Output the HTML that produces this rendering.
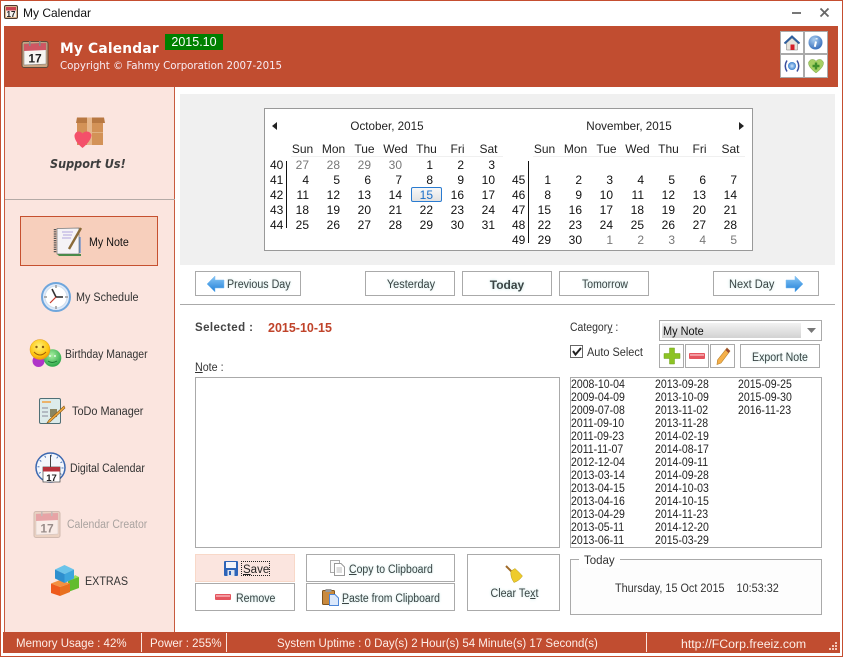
<!DOCTYPE html>
<html><head><meta charset="utf-8"><title>My Calendar</title>
<style>
html,body{margin:0;padding:0;background:#fff}
#w{position:relative;width:843px;height:657px;overflow:hidden;background:#fff;font-family:"Liberation Sans",sans-serif;font-size:12px;color:#222}
.a{position:absolute}
.t{position:absolute;white-space:nowrap;line-height:14px;transform:scaleX(var(--s,1));transform-origin:0 50%}
.c{text-align:center;transform-origin:50% 50%}
.b{position:absolute;box-sizing:border-box;border:1px solid #aaa;background:#fff}
.g{color:#3a4444;text-shadow:0 0 3px #bfe3e0;font-size:11.5px}
.s{color:#333;font-size:11.5px}
.st{color:#fdeee8;font-size:11.5px}
.r{position:absolute;display:flex;height:15px;line-height:15px;color:#111}
.r span{display:block;width:31px;text-align:right;flex:none}
.r i{font-style:normal;color:#777}
.h span{text-align:center;color:#222}
.d{font-size:11.5px;color:#222;line-height:13px;position:absolute;top:379px;transform:scaleX(.915);transform-origin:0 50%}
svg{position:absolute;overflow:visible}
</style></head><body><div id="w">
<!-- window frame -->
<div class="a" style="left:0;top:0;width:843px;height:1px;background:#c54e30"></div>
<div class="a" style="left:0;top:0;width:1px;height:657px;background:#c54e30"></div>
<div class="a" style="left:842px;top:0;width:1px;height:657px;background:#c54e30"></div>
<div class="a" style="left:0;top:656px;width:843px;height:1px;background:#c54e30"></div>

<!-- title bar -->
<svg style="left:4px;top:5px" width="14" height="14" viewBox="0 0 14 14"><rect x=".5" y=".5" width="13" height="13" rx="1.5" fill="#d9b48c" stroke="#4a3a30"/><rect x="2" y="2" width="10" height="10" fill="#f6f3ee"/><rect x="2" y="2" width="10" height="3.500" fill="#c8434f"/><text x="7" y="12" font-size="8" font-weight="bold" text-anchor="middle" font-family="Liberation Sans" fill="#222">17</text></svg>
<div class="t" style="left:23px;top:6px;color:#111">My Calendar</div>
<div class="a" style="left:792px;top:12px;width:9px;height:2px;background:#777"></div>
<svg style="left:820px;top:8px" width="9" height="9" viewBox="0 0 9 9"><path d="M0.500 0.500L8.500 8.500M8.500 0.500L0.500 8.500" stroke="#666" stroke-width="1.800"/></svg>

<!-- header -->
<div class="a" style="left:4px;top:26px;width:834px;height:61px;background:#c14d30"></div>
<svg style="left:21px;top:40px" width="28" height="28" viewBox="0 0 28 28">
<rect x="1" y="1.500" width="26" height="26" rx="2" fill="#c9a684" stroke="#5d4a3c"/>
<path d="M3 4L25 3V24L3 25Z" fill="#f7f5f2" stroke="#777" stroke-width=".5"/>
<path d="M3 4L25 3V10L3 11Z" fill="#cf5663"/>
<rect x="8" y="1" width="1.600" height="5" fill="#888"/><rect x="18" y="1" width="1.600" height="5" fill="#888"/>
<text x="14" y="22.500" font-size="12" font-weight="bold" text-anchor="middle" font-family="Liberation Sans" fill="#222">17</text></svg>
<div class="t" style="--s:.95;left:60px;top:42px;color:#fff;font:bold 14.500px/14px 'DejaVu Sans',sans-serif;letter-spacing:.2px">My Calendar</div>
<div class="t" style="--s:.933;left:60px;top:59px;color:#f8ecf4;font:11px/14px 'DejaVu Sans',sans-serif;letter-spacing:-.05px">Copyright © Fahmy Corporation 2007-2015</div>
<div class="t" style="left:165px;top:34px;width:58px;height:16px;line-height:16px;background:#008000;color:#fff;text-align:center;font-size:12.500px">2015.10</div>

<!-- header icons -->
<div class="a" style="left:780px;top:31px;width:48px;height:47px;background:#aaa"></div>
<div class="a" style="left:781px;top:32px;width:22px;height:21px;background:#fff"></div>
<div class="a" style="left:805px;top:32px;width:22px;height:21px;background:#fff"></div>
<div class="a" style="left:781px;top:55px;width:22px;height:22px;background:#fff"></div>
<div class="a" style="left:805px;top:55px;width:22px;height:22px;background:#fff"></div>
<svg style="left:784px;top:35px" width="16" height="16" viewBox="0 0 16 16"><path d="M2.500 8V15H13.500V8L8 3Z" fill="#e6e4dc" stroke="#777" stroke-width=".5"/><path d="M0.500 8.500L8 1.500L15.500 8.500" fill="none" stroke="#2f5f9e" stroke-width="2"/><rect x="6.500" y="9.500" width="4" height="5.500" fill="#d4202a"/></svg>
<svg style="left:808px;top:35px" width="15" height="15" viewBox="0 0 15 15"><defs><radialGradient id="gb" cx=".4" cy=".3" r=".8"><stop offset="0" stop-color="#a8cdf0"/><stop offset="1" stop-color="#2a62b4"/></radialGradient></defs><circle cx="7.500" cy="7.500" r="7" fill="url(#gb)"/><path d="M8 6.500L6.800 11.800M8.600 3.200V4.400" stroke="#fff" stroke-width="2"/></svg>
<svg style="left:784px;top:59px" width="16" height="14" viewBox="0 0 16 14"><defs><radialGradient id="gc"><stop offset="0" stop-color="#cfe6fb"/><stop offset="1" stop-color="#3b80d0"/></radialGradient></defs><circle cx="8" cy="7" r="4" fill="url(#gc)"/><path d="M3 1.500Q-.5 7 3 12.500M13 1.500Q16.500 7 13 12.500" fill="none" stroke="#3a4f9e" stroke-width="1.500"/></svg>
<svg style="left:808px;top:59px" width="16" height="14" viewBox="0 0 16 14"><path d="M8 14Q0 8 .5 3.500Q2 0 5 .5Q7 .8 8 2.200Q9 .8 11 .5Q14 0 15.500 3.500Q16 8 8 14Z" fill="#a5cf63" stroke="#7ba344" stroke-width=".5"/><path d="M8 3.500V10.500M4.500 7H11.500" stroke="#3f8f2a" stroke-width="2.400"/></svg>

<!-- sidebar -->
<div class="a" style="left:5px;top:87px;width:169px;height:545px;background:#fbe5df"></div>
<div class="a" style="left:174px;top:87px;width:1px;height:545px;background:#c85a3e"></div>
<div class="a" style="left:5px;top:199px;width:170px;height:1px;background:#b4aaa6"></div>
<div class="a" style="left:4px;top:87px;width:1px;height:545px;background:#c85a3e"></div>
<svg style="left:74px;top:117px" width="32" height="32" viewBox="0 0 32 32"><path d="M3 0.500H30L31 6H2Z" fill="#b87842"/><rect x="3" y="6" width="26" height="22" fill="#d39257"/><rect x="13" y="0.500" width="5" height="27.500" fill="#e6b78c"/><rect x="18" y="15" width="11" height="1" fill="#e0b080"/><path d="M8.500 31Q0 24 .5 18Q2 14 5 14.500Q7.500 15 8.500 16.500Q9.500 15 12 14.500Q16 14 17.500 18Q17 24 8.500 31Z" fill="#f4506a"/></svg>
<div class="t" style="--s:.9;left:50px;top:157px;font:italic bold 12.500px/14px 'DejaVu Sans',sans-serif;color:#3d3d3d">Support Us!</div>

<div class="a" style="left:20px;top:216px;width:138px;height:50px;box-sizing:border-box;border:1px solid #c6502f;background:#f7cfbc"></div>
<svg style="left:54px;top:227px" width="29" height="30" viewBox="0 0 29 30"><path d="M3 1.500L25 1V27H3Z" fill="#f5f3f6" stroke="#777" stroke-width=".7"/><path d="M1 2V26" stroke="#555" stroke-width="2.500" stroke-dasharray="1.200 1"/><path d="M8 5H19M9 8H18M8 11H17" stroke="#9a8cd8" stroke-width=".8"/><path d="M3 27H27V29H5Z" fill="#4a8a4a"/><path d="M27 1L15 22" stroke="#8a6a38" stroke-width="2.400"/><path d="M26 10V26" stroke="#3a7ad0" stroke-width="1"/></svg>
<div class="t" style="--s:.93;left:89px;top:236px;color:#111;font-size:11.500px">My Note</div>

<svg style="left:41px;top:282px" width="30" height="30" viewBox="0 0 30 30"><circle cx="15" cy="15" r="14" fill="#dfeafa" stroke="#6fa6dc" stroke-width="2"/><circle cx="15" cy="15" r="11" fill="#fff" stroke="#cfdfee"/><path d="M15 3V6M15 24V27M3 15H6M24 15H27" stroke="#999" stroke-width="1.500"/><path d="M15 15L11 7" stroke="#333" stroke-width="1.600"/><path d="M15 15H22" stroke="#333" stroke-width="1.600"/><path d="M15 15L9 21" stroke="#c83a2a" stroke-width="1.200"/></svg>
<div class="t s" style="--s:.94;left:76px;top:291px">My Schedule</div>

<svg style="left:29px;top:339px" width="32" height="31" viewBox="0 0 32 31"><defs><radialGradient id="sy" cx=".45" cy=".35" r=".7"><stop offset="0" stop-color="#fff27a"/><stop offset=".7" stop-color="#fdc40c"/><stop offset="1" stop-color="#ef8a10"/></radialGradient><radialGradient id="sg" cx=".45" cy=".35" r=".7"><stop offset="0" stop-color="#a8f0a0"/><stop offset="1" stop-color="#20a040"/></radialGradient></defs><circle cx="9.500" cy="22" r="6" fill="#b034c8"/><circle cx="23.500" cy="19" r="8.800" fill="url(#sg)"/><path d="M19 22Q23 25 28 22" stroke="#187a30" fill="none"/><path d="M21 16V18M26 16V18" stroke="#fff" stroke-width="1.200"/><circle cx="11" cy="10.500" r="10" fill="url(#sy)" stroke="#e09a20" stroke-width=".5"/><path d="M5 13Q11 19 17 13" stroke="#a0600a" fill="none"/><circle cx="7.500" cy="8" r="1.200" fill="#8a5a10"/><circle cx="14" cy="8" r="1.200" fill="#8a5a10"/></svg>
<div class="t s" style="--s:.91;left:65px;top:348px">Birthday Manager</div>

<svg style="left:39px;top:398px" width="23" height="26" viewBox="0 0 23 26"><rect x=".5" y=".5" width="21" height="25" rx="1.500" fill="#dcebea" stroke="#4f6f76"/><path d="M3 4H12" stroke="#f0a040" stroke-width="1.500"/><path d="M3 10H9M3 14H9M3 18H9" stroke="#889" stroke-width="1"/><rect x="11" y="11" width="7" height="8" fill="#8a8560"/><path d="M25 8L10 22L8 25L11 24L26 10Z" fill="#f3a93a" stroke="#8a5a18" stroke-width=".6"/></svg>
<div class="t s" style="--s:.947;left:72px;top:405px">ToDo Manager</div>

<svg style="left:35px;top:452px" width="31" height="32" viewBox="0 0 31 32"><circle cx="15.500" cy="15.500" r="14.500" fill="#f4f7fc" stroke="#3c68b0" stroke-width="1.500"/><circle cx="15.500" cy="15.500" r="12" fill="none" stroke="#4a74b8" stroke-width="2" stroke-dasharray="1 5.280"/><path d="M15.500 15V3" stroke="#444"/><rect x="8" y="15" width="17" height="15" fill="#fff" stroke="#444" stroke-width=".7"/><rect x="8" y="15" width="17" height="4.500" fill="#b8323c"/><text x="16.500" y="29" font-size="9.500" font-weight="bold" text-anchor="middle" font-family="Liberation Sans" fill="#222">17</text></svg>
<div class="t s" style="--s:.915;left:70px;top:462px">Digital Calendar</div>

<svg style="left:33px;top:510px;opacity:.45" width="28" height="28" viewBox="0 0 28 28"><rect x="1" y="1.500" width="26" height="26" rx="2" fill="#dcbca0" stroke="#a08878"/><path d="M3 4L25 3V24L3 25Z" fill="#f7f5f2" stroke="#999" stroke-width=".5"/><path d="M3 4L25 3V10L3 11Z" fill="#cf5663"/><rect x="8" y="1" width="1.600" height="5" fill="#888"/><rect x="18" y="1" width="1.600" height="5" fill="#888"/><text x="14" y="22.500" font-size="12" font-weight="bold" text-anchor="middle" font-family="Liberation Sans" fill="#222">17</text></svg>
<div class="t" style="--s:.91;left:67px;top:518px;color:#aaa3a0;font-size:11.500px">Calendar Creator</div>

<svg style="left:51px;top:565px" width="29" height="32" viewBox="0 0 29 32"><path d="M17 14L28 12V23L17 27Z" fill="#62bc2c"/><path d="M24 10L28 12L20 15Z" fill="#9ade5a"/><path d="M0 18.500L9 15L19 18.500L9 22Z" fill="#f39040"/><path d="M0 18.500L9 22V31L0 28Z" fill="#ee5a1c"/><path d="M9 22L19 18.500V27L9 31Z" fill="#e8701f"/><path d="M4 4.500L13.500 0L23 4.500L13.500 9Z" fill="#6bc4ea"/><path d="M4 4.500L13.500 9V18L4 13.500Z" fill="#2e8fce"/><path d="M13.500 9L23 4.500V13.500L13.500 18Z" fill="#3da6dd"/></svg>
<div class="t" style="--s:.935;left:85px;top:575px;color:#333;font-size:11.500px">EXTRAS</div>

<!-- status bar -->
<div class="a" style="left:3px;top:632px;width:837px;height:21px;background:#c14d30"></div>
<div class="a" style="left:141px;top:633px;width:1px;height:19px;background:#fbe5df"></div>
<div class="a" style="left:226px;top:633px;width:1px;height:19px;background:#fbe5df"></div>
<div class="a" style="left:646px;top:633px;width:1px;height:19px;background:#fbe5df"></div>
<div class="t st" style="left:16px;top:637px">Memory Usage : 42%</div>
<div class="t st" style="left:150px;top:637px">Power : 255%</div>
<div class="t st" style="left:277px;top:637px">System Uptime : 0 Day(s) 2 Hour(s) 54 Minute(s) 17 Second(s)</div>
<div class="t st" style="left:681px;top:637px;font-size:12.300px">http://FCorp.freeiz.com</div>
<svg style="left:828px;top:642px" width="10" height="10" viewBox="0 0 10 10"><path d="M7 0h2v2H7zM4 3h2v2H4zM7 3h2v2H7zM1 6h2v2H1zM4 6h2v2H4zM7 6h2v2H7z" fill="#f3c7b8"/></svg>

<!-- calendar panel -->
<div class="a" style="left:180px;top:94px;width:655px;height:171px;background:#f0f0f0"></div>
<div class="a" style="left:264px;top:108px;width:489px;height:143px;box-sizing:border-box;border:1px solid #999;background:#fff"></div>
<svg style="left:272px;top:122px" width="6" height="8"><path d="M5 0V8L0 4Z" fill="#222"/></svg>
<svg style="left:739px;top:122px" width="6" height="8"><path d="M0 0V8L5 4Z" fill="#222"/></svg>
<div class="t c" style="--s:.97;left:287px;width:200px;top:119px">October, 2015</div>
<div class="t c" style="--s:.97;left:529px;width:200px;top:119px">November, 2015</div>

<div class="r h" style="left:287px;top:142px"><span>Sun</span><span>Mon</span><span>Tue</span><span>Wed</span><span>Thu</span><span>Fri</span><span>Sat</span></div>
<div class="r h" style="left:529px;top:142px"><span>Sun</span><span>Mon</span><span>Tue</span><span>Wed</span><span>Thu</span><span>Fri</span><span>Sat</span></div>
<div class="a" style="left:291px;top:156px;width:212px;height:1px;background:#f0f0f0"></div>
<div class="a" style="left:533px;top:156px;width:212px;height:1px;background:#f0f0f0"></div>
<div class="a" style="left:286px;top:161px;width:1px;height:67px;background:#111"></div>
<div class="a" style="left:528px;top:161px;width:1px;height:82px;background:#111"></div>
<div class="a" style="left:411px;top:187px;width:31px;height:15px;box-sizing:border-box;border:1px solid #2a7bd0;border-radius:2px;background:linear-gradient(#f8f8f8,#e2e2e2)"></div>

<div class="t" style="left:270px;top:158px;line-height:15px;color:#111">40<br>41<br>42<br>43<br>44</div>
<div class="t" style="left:512px;top:173px;line-height:15px;color:#111">45<br>46<br>47<br>48<br>49</div>

<div class="r" style="left:278px;top:158px"><span><i>27</i></span><span><i>28</i></span><span><i>29</i></span><span><i>30</i></span><span>1</span><span>2</span><span>3</span></div>
<div class="r" style="left:278px;top:173px"><span>4</span><span>5</span><span>6</span><span>7</span><span>8</span><span>9</span><span>10</span></div>
<div class="r" style="left:278px;top:188px"><span>11</span><span>12</span><span>13</span><span>14</span><span style="color:#1a6fc9">15</span><span>16</span><span>17</span></div>
<div class="r" style="left:278px;top:203px"><span>18</span><span>19</span><span>20</span><span>21</span><span>22</span><span>23</span><span>24</span></div>
<div class="r" style="left:278px;top:218px"><span>25</span><span>26</span><span>27</span><span>28</span><span>29</span><span>30</span><span>31</span></div>

<div class="r" style="left:520px;top:173px"><span>1</span><span>2</span><span>3</span><span>4</span><span>5</span><span>6</span><span>7</span></div>
<div class="r" style="left:520px;top:188px"><span>8</span><span>9</span><span>10</span><span>11</span><span>12</span><span>13</span><span>14</span></div>
<div class="r" style="left:520px;top:203px"><span>15</span><span>16</span><span>17</span><span>18</span><span>19</span><span>20</span><span>21</span></div>
<div class="r" style="left:520px;top:218px"><span>22</span><span>23</span><span>24</span><span>25</span><span>26</span><span>27</span><span>28</span></div>
<div class="r" style="left:520px;top:233px"><span>29</span><span>30</span><span><i>1</i></span><span><i>2</i></span><span><i>3</i></span><span><i>4</i></span><span><i>5</i></span></div>

<!-- nav -->
<div class="b" style="left:195px;top:271px;width:106px;height:25px"></div>
<svg style="left:207px;top:276px" width="17" height="16" viewBox="0 0 17 16"><defs><linearGradient id="ar" x1="0" y1="0" x2="0" y2="1"><stop offset="0" stop-color="#8ac8f6"/><stop offset="1" stop-color="#1f7fd8"/></linearGradient></defs><path d="M8 0V4H17V12H8V16L0 8Z" fill="url(#ar)" stroke="#7bbdf2" stroke-width=".5"/></svg>
<div class="t g" style="--s:.93;left:227px;top:278px">Previous Day</div>
<div class="b" style="left:365px;top:271px;width:90px;height:25px"></div>
<div class="t g c" style="--s:.95;left:366px;width:90px;top:278px">Yesterday</div>
<div class="b" style="left:462px;top:271px;width:90px;height:25px"></div>
<div class="t g c" style="left:462px;width:90px;top:278px;font-weight:bold;font-size:12px">Today</div>
<div class="b" style="left:559px;top:271px;width:90px;height:25px"></div>
<div class="t g c" style="--s:.91;left:560px;width:90px;top:278px">Tomorrow</div>
<div class="b" style="left:713px;top:271px;width:106px;height:25px"></div>
<div class="t g" style="--s:.96;left:729px;top:278px">Next Day</div>
<svg style="left:786px;top:276px" width="17" height="16" viewBox="0 0 17 16"><path d="M9 0V4H0V12H9V16L17 8Z" fill="url(#ar)" stroke="#7bbdf2" stroke-width=".5"/></svg>
<div class="a" style="left:180px;top:304px;width:655px;height:1px;background:#aaa"></div>

<!-- note area -->
<div class="t" style="left:195px;top:321px;font-weight:bold;color:#444;font-size:11.500px;letter-spacing:.4px">Selected :</div>
<div class="t" style="left:268px;top:321px;font-weight:bold;color:#c0432a;font-size:12.500px">2015-10-15</div>
<div class="t s" style="--s:.93;left:195px;top:361px"><u>N</u>ote :</div>
<div class="b" style="left:195px;top:377px;width:365px;height:171px"></div>

<div class="t s" style="--s:.91;left:570px;top:321px">Categor<u>y</u> :</div>
<div class="b" style="left:659px;top:320px;width:163px;height:21px"></div>
<div class="a" style="left:662px;top:323px;width:139px;height:15px;background:linear-gradient(#f2f2f2,#d2d2d2)"></div>
<div class="t" style="--s:.95;left:663px;top:325px;color:#111;font-size:11.500px">My Note</div>
<svg style="left:807px;top:328px" width="9" height="5"><path d="M0 0H9L4.500 5Z" fill="#777"/></svg>
<div class="a" style="left:570px;top:345px;width:13px;height:13px;box-sizing:border-box;border:1px solid #666;background:#fff"></div>
<svg style="left:572px;top:347px" width="10" height="9"><path d="M1 4L3.500 7.500L9 1" fill="none" stroke="#222" stroke-width="2"/></svg>
<div class="t s" style="--s:.95;left:587px;top:346px">Auto Select</div>

<div class="b" style="left:659px;top:344px;width:25px;height:24px"></div>
<svg style="left:664px;top:348px" width="16" height="16" viewBox="0 0 16 16"><path d="M5.500 0H10.500V5.500H16V10.500H10.500V16H5.500V10.500H0V5.500H5.500Z" fill="#8cc324" stroke="#6ea01a" stroke-width=".5"/></svg>
<div class="b" style="left:685px;top:344px;width:24px;height:24px"></div>
<svg style="left:689px;top:353px" width="16" height="6"><rect width="16" height="6" rx="1" fill="#e4555e"/><rect x="1" y="1" width="14" height="2" fill="#f39aa0"/></svg>
<div class="b" style="left:710px;top:344px;width:25px;height:24px"></div>
<svg style="left:716px;top:347px" width="15" height="18" viewBox="0 0 15 18"><path d="M11 1L14 4L5 16L1 17.500L1.500 13Z" fill="#f5b04a" stroke="#b8802a" stroke-width=".6"/><path d="M11 1L14 4L12.500 6L9.500 3Z" fill="#9a4a30"/></svg>
<div class="b" style="left:740px;top:344px;width:80px;height:24px"></div>
<div class="t g c" style="--s:.92;left:740px;width:80px;top:351px">Export Note</div>

<!-- list -->
<div class="b" style="left:570px;top:377px;width:252px;height:171px"></div>
<div class="d" style="left:571px">2008-10-04<br>2009-04-09<br>2009-07-08<br>2011-09-10<br>2011-09-23<br>2011-11-07<br>2012-12-04<br>2013-03-14<br>2013-04-15<br>2013-04-16<br>2013-04-29<br>2013-05-11<br>2013-06-11</div>
<div class="d" style="left:654.500px">2013-09-28<br>2013-10-09<br>2013-11-02<br>2013-11-28<br>2014-02-19<br>2014-08-17<br>2014-09-11<br>2014-09-28<br>2014-10-03<br>2014-10-15<br>2014-11-23<br>2014-12-20<br>2015-03-29</div>
<div class="d" style="left:737.500px">2015-09-25<br>2015-09-30<br>2016-11-23</div>

<!-- today group -->
<div class="b" style="left:570px;top:559px;width:252px;height:56px;background:#fdfdfd"></div>
<div class="t s" style="left:579px;top:554px;background:#fff;padding:0 5px">Today</div>
<div class="t s" style="--s:.943;left:615px;top:582px;white-space:pre">Thursday, 15 Oct 2015    10:53:32</div>

<!-- bottom buttons -->
<div class="b" style="left:195px;top:554px;width:100px;height:28px;background:#fbe5df;border-color:#f8d8c8"></div>
<svg style="left:224px;top:561px" width="14" height="15" viewBox="0 0 14 15"><rect width="14" height="15" rx="1" fill="#2e64b8"/><rect x="2" y="1" width="10" height="6" fill="#f4f4fa"/><rect x="3.500" y="9" width="7" height="6" fill="#dfe4ee"/><rect x="5" y="10" width="2" height="4" fill="#2e64b8"/></svg>
<div class="a" style="left:241px;top:561px;width:29px;height:15px;box-sizing:border-box;border:1px dotted #222"></div>
<div class="t" style="left:243px;top:563px;color:#222;font-size:11.500px"><u>S</u>ave</div>
<div class="b" style="left:195px;top:583px;width:100px;height:28px"></div>
<svg style="left:215px;top:594px" width="16" height="6"><rect width="16" height="6" rx="1" fill="#e4555e"/><rect x="1" y="1" width="14" height="2" fill="#f39aa0"/></svg>
<div class="t g" style="--s:.92;left:236px;top:592px">Remove</div>

<div class="b" style="left:306px;top:554px;width:149px;height:28px"></div>
<svg style="left:330px;top:560px" width="15" height="16" viewBox="0 0 15 16"><rect x=".5" y=".5" width="9" height="12" fill="#fafafa" stroke="#aaa"/><path d="M4.500 3.500H11L14.500 7V15.500H4.500Z" fill="#fff" stroke="#999"/><path d="M6.500 8H12M6.500 10H12M6.500 12H12" stroke="#bbb"/></svg>
<div class="t g" style="--s:.91;left:349px;top:563px"><u>C</u>opy to Clipboard</div>
<div class="b" style="left:306px;top:583px;width:149px;height:28px"></div>
<svg style="left:322px;top:589px" width="17" height="17" viewBox="0 0 17 17"><rect x=".5" y="1.500" width="12" height="14" rx="1" fill="#c98a3e" stroke="#80551f"/><rect x="3.500" y="0" width="6" height="3" fill="#999"/><path d="M7.500 5.500H13L16.500 9V16.500H7.500Z" fill="#dbe8fb" stroke="#4d86d8"/></svg>
<div class="t g" style="--s:.907;left:342px;top:592px"><u>P</u>aste from Clipboard</div>

<div class="b" style="left:467px;top:554px;width:93px;height:57px"></div>
<svg style="left:505px;top:565px" width="19" height="18" viewBox="0 0 19 18"><path d="M1 1L7 7" stroke="#a06a28" stroke-width="2"/><path d="M6 6L10 3.500Q14 7 17.500 11Q14 16 9 17.500Q5 12 6 6Z" fill="#eecb2c" stroke="#b49a18" stroke-width=".5"/></svg>
<div class="t g c" style="--s:.93;left:468px;width:93px;top:587px">Clear Te<u>x</u>t</div>
</div></body></html>
